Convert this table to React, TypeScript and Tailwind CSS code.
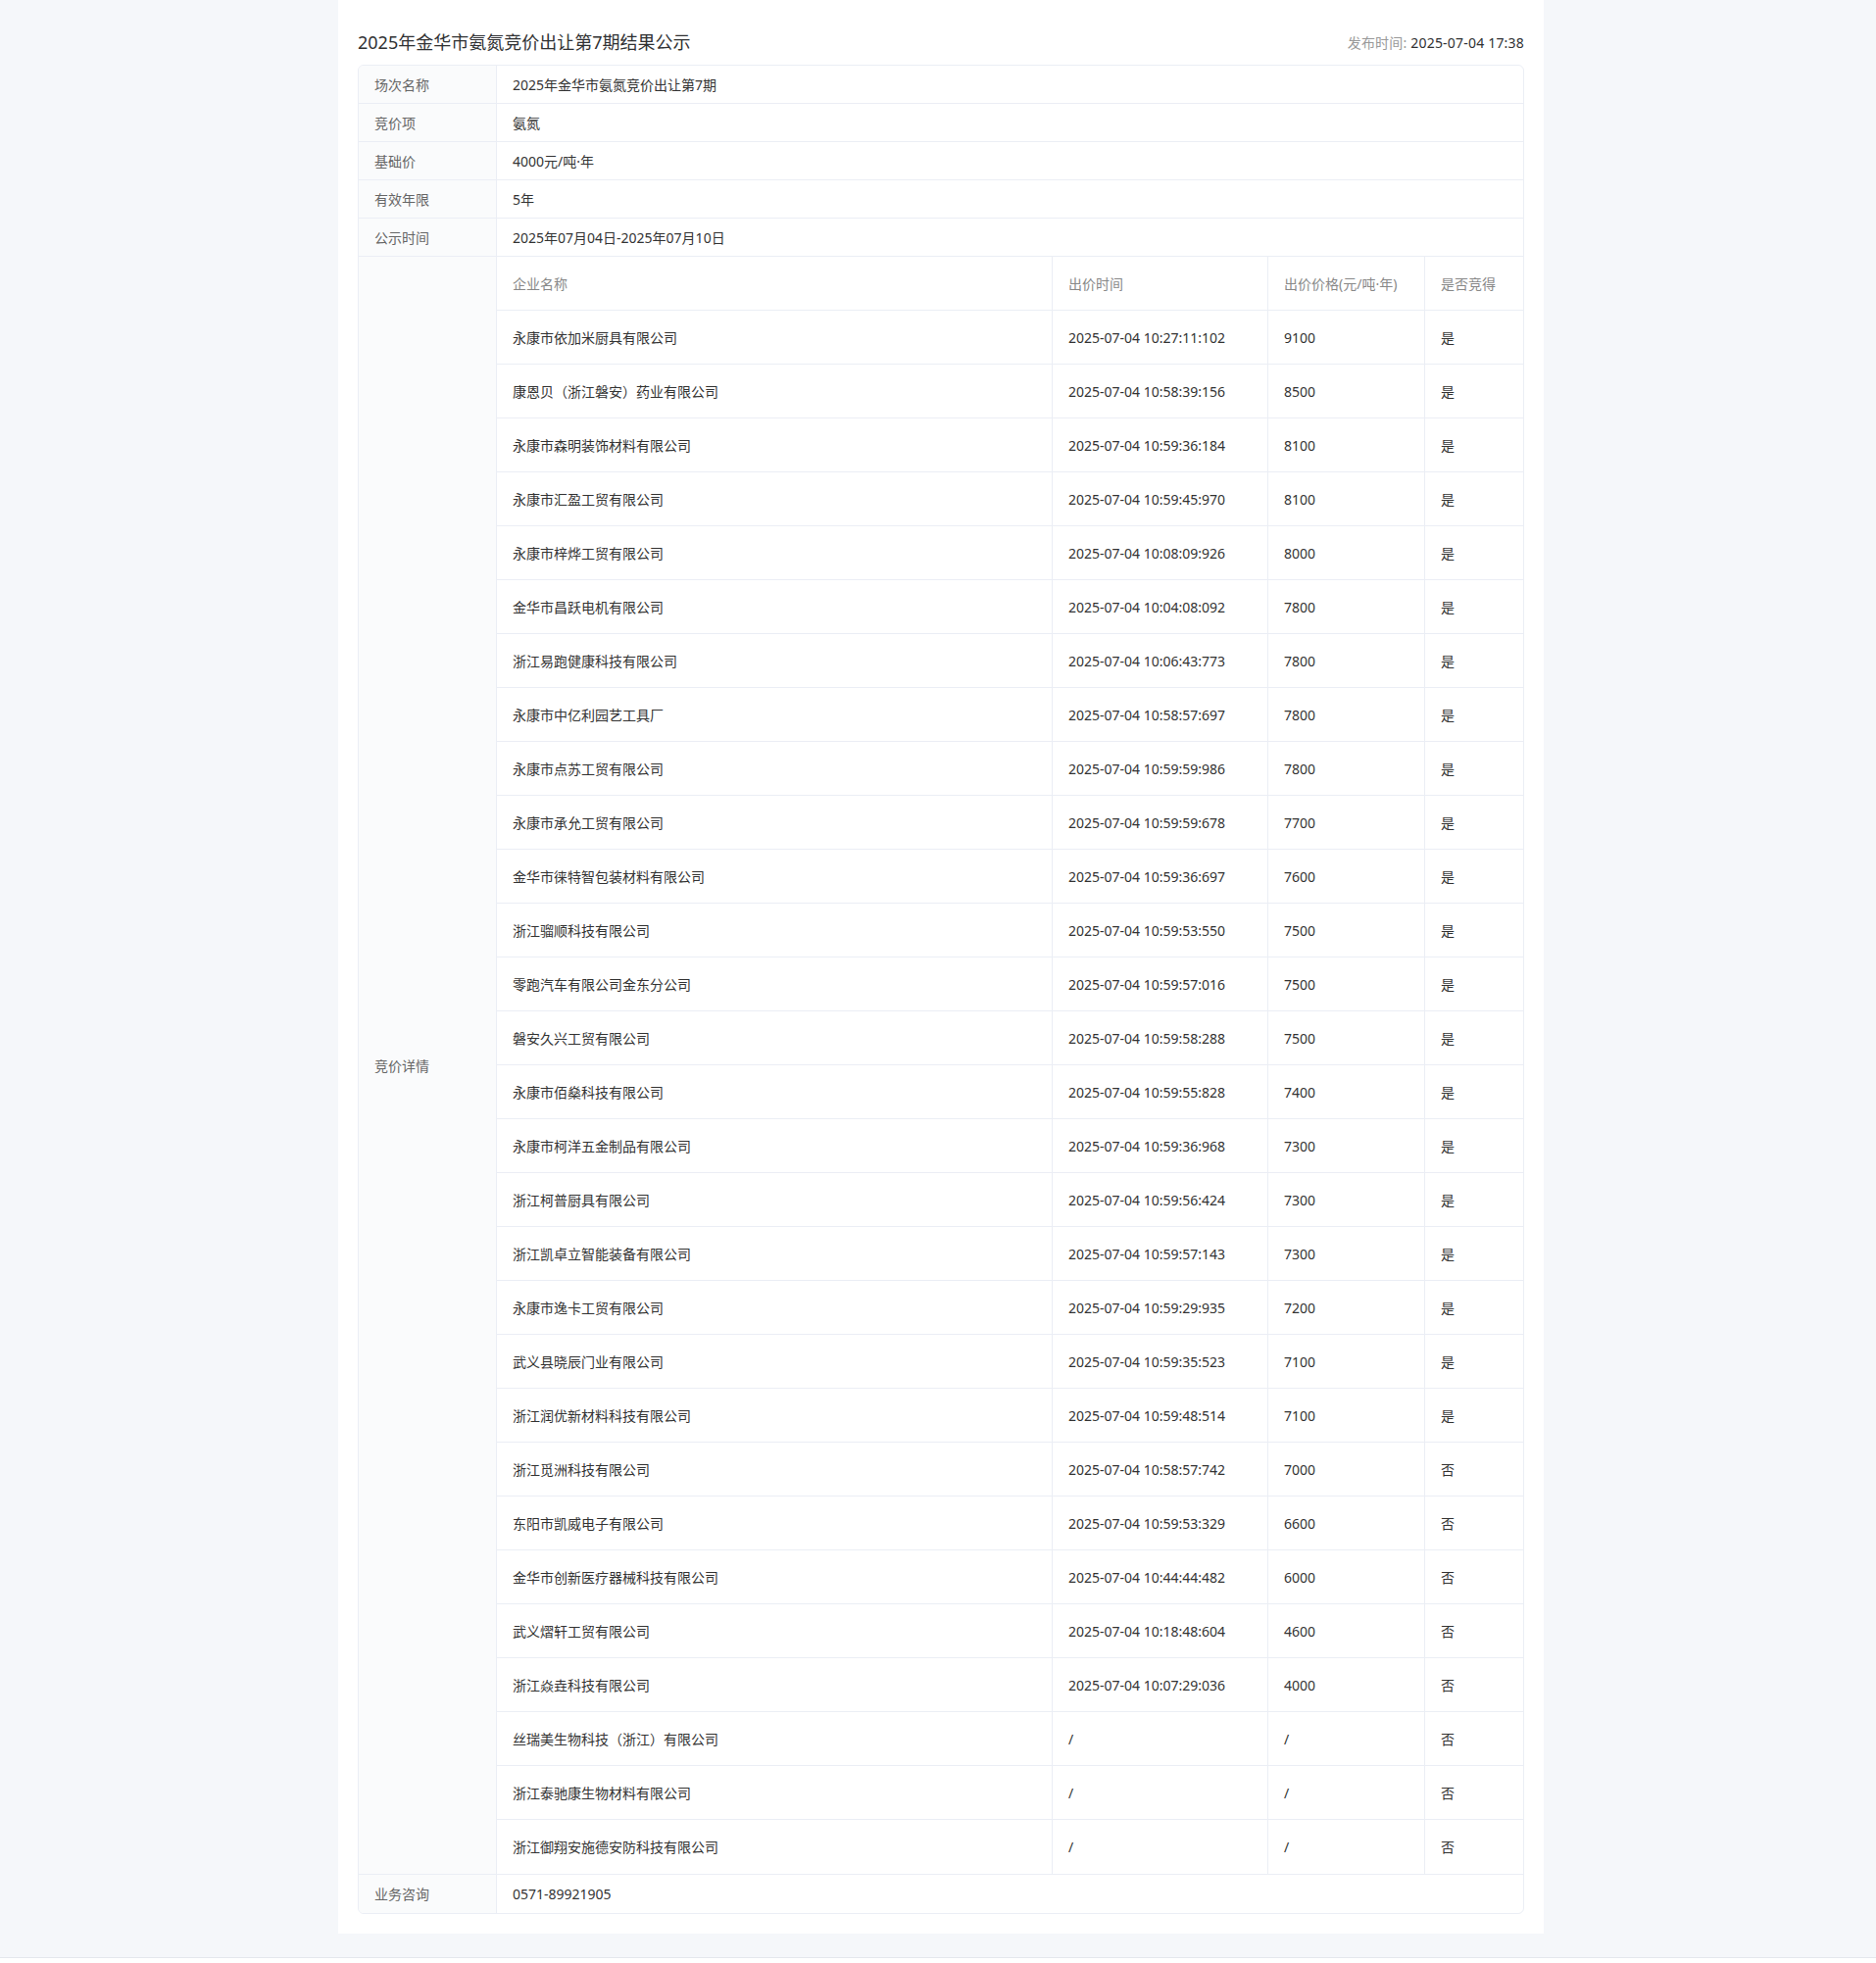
const font = "font-['Noto_Sans','Noto_Sans_CJK_SC',sans-serif]";

const info = [
  { label: "场次名称", value: "2025年金华市氨氮竞价出让第7期" },
  { label: "竞价项", value: "氨氮" },
  { label: "基础价", value: "4000元/吨·年" },
  { label: "有效年限", value: "5年" },
  { label: "公示时间", value: "2025年07月04日-2025年07月10日" },
];

const bids: [string, string, string, string][] = [
  ["永康市依加米厨具有限公司", "2025-07-04 10:27:11:102", "9100", "是"],
  ["康恩贝（浙江磐安）药业有限公司", "2025-07-04 10:58:39:156", "8500", "是"],
  ["永康市森明装饰材料有限公司", "2025-07-04 10:59:36:184", "8100", "是"],
  ["永康市汇盈工贸有限公司", "2025-07-04 10:59:45:970", "8100", "是"],
  ["永康市梓烨工贸有限公司", "2025-07-04 10:08:09:926", "8000", "是"],
  ["金华市昌跃电机有限公司", "2025-07-04 10:04:08:092", "7800", "是"],
  ["浙江易跑健康科技有限公司", "2025-07-04 10:06:43:773", "7800", "是"],
  ["永康市中亿利园艺工具厂", "2025-07-04 10:58:57:697", "7800", "是"],
  ["永康市点苏工贸有限公司", "2025-07-04 10:59:59:986", "7800", "是"],
  ["永康市承允工贸有限公司", "2025-07-04 10:59:59:678", "7700", "是"],
  ["金华市徕特智包装材料有限公司", "2025-07-04 10:59:36:697", "7600", "是"],
  ["浙江骝顺科技有限公司", "2025-07-04 10:59:53:550", "7500", "是"],
  ["零跑汽车有限公司金东分公司", "2025-07-04 10:59:57:016", "7500", "是"],
  ["磐安久兴工贸有限公司", "2025-07-04 10:59:58:288", "7500", "是"],
  ["永康市佰燊科技有限公司", "2025-07-04 10:59:55:828", "7400", "是"],
  ["永康市柯洋五金制品有限公司", "2025-07-04 10:59:36:968", "7300", "是"],
  ["浙江柯普厨具有限公司", "2025-07-04 10:59:56:424", "7300", "是"],
  ["浙江凯卓立智能装备有限公司", "2025-07-04 10:59:57:143", "7300", "是"],
  ["永康市逸卡工贸有限公司", "2025-07-04 10:59:29:935", "7200", "是"],
  ["武义县晓辰门业有限公司", "2025-07-04 10:59:35:523", "7100", "是"],
  ["浙江润优新材料科技有限公司", "2025-07-04 10:59:48:514", "7100", "是"],
  ["浙江觅洲科技有限公司", "2025-07-04 10:58:57:742", "7000", "否"],
  ["东阳市凯威电子有限公司", "2025-07-04 10:59:53:329", "6600", "否"],
  ["金华市创新医疗器械科技有限公司", "2025-07-04 10:44:44:482", "6000", "否"],
  ["武义熠轩工贸有限公司", "2025-07-04 10:18:48:604", "4600", "否"],
  ["浙江焱垚科技有限公司", "2025-07-04 10:07:29:036", "4000", "否"],
  ["丝瑞美生物科技（浙江）有限公司", "/", "/", "否"],
  ["浙江泰驰康生物材料有限公司", "/", "/", "否"],
  ["浙江御翔安施德安防科技有限公司", "/", "/", "否"],
];

const grid = "grid grid-cols-[567px_220px_160px_1fr]";

const LabelCell = ({ children }: { children: React.ReactNode }) => (
  <div className="flex w-[141px] shrink-0 items-center border-r border-[#ebeef5] bg-[#fafbfc] px-4 text-[#666]">
    {children}
  </div>
);

export default function App() {
  return (
    <div className={`min-h-screen bg-[#f5f7fa] ${font}`}>
      <div className="flex justify-center pl-[6px]">
        <main className="w-[1230px] bg-white px-5 pt-5 pb-5">
          <div className="flex h-[46px] items-center justify-between">
            <h1 className="text-[18px] text-[#303133]">2025年金华市氨氮竞价出让第7期结果公示</h1>
            <div className="text-[14px] tracking-[0.2px]">
              <span className="text-[#999]">发布时间: </span>
              <span className="text-[#303133]">2025-07-04 17:38</span>
            </div>
          </div>

          <div className="overflow-hidden rounded-md border border-[#ebeef5] text-[14px] text-[#333]">
            {info.map((row) => (
              <div key={row.label} className="flex h-[39px] border-b border-[#ebeef5]">
                <LabelCell>{row.label}</LabelCell>
                <div className="flex flex-1 items-center px-4">{row.value}</div>
              </div>
            ))}

            <div className="flex border-b border-[#ebeef5]">
              <LabelCell>竞价详情</LabelCell>
              <div className="flex-1">
                <div className={`${grid} h-[55px] border-b border-[#ebeef5] text-[#888]`}>
                  <div className="flex items-center border-r border-[#ebeef5] px-4">企业名称</div>
                  <div className="flex items-center border-r border-[#ebeef5] px-4">出价时间</div>
                  <div className="flex items-center border-r border-[#ebeef5] px-4">出价价格(元/吨·年)</div>
                  <div className="flex items-center px-4">是否竞得</div>
                </div>
                {bids.map(([name, time, price, won], i) => (
                  <div
                    key={name}
                    className={`${grid} h-[55px] ${i < bids.length - 1 ? "border-b border-[#ebeef5]" : ""}`}
                  >
                    <div className="flex items-center border-r border-[#ebeef5] px-4">{name}</div>
                    <div className="flex items-center border-r border-[#ebeef5] px-4">{time}</div>
                    <div className="flex items-center border-r border-[#ebeef5] px-4">{price}</div>
                    <div className="flex items-center px-4">{won}</div>
                  </div>
                ))}
              </div>
            </div>

            <div className="flex h-[39px]">
              <LabelCell>业务咨询</LabelCell>
              <div className="flex flex-1 items-center px-4">0571-89921905</div>
            </div>
          </div>
        </main>
      </div>
      <footer className="mt-6 h-[80px] border-t border-[#e4e7ed] bg-white" />
    </div>
  );
}
